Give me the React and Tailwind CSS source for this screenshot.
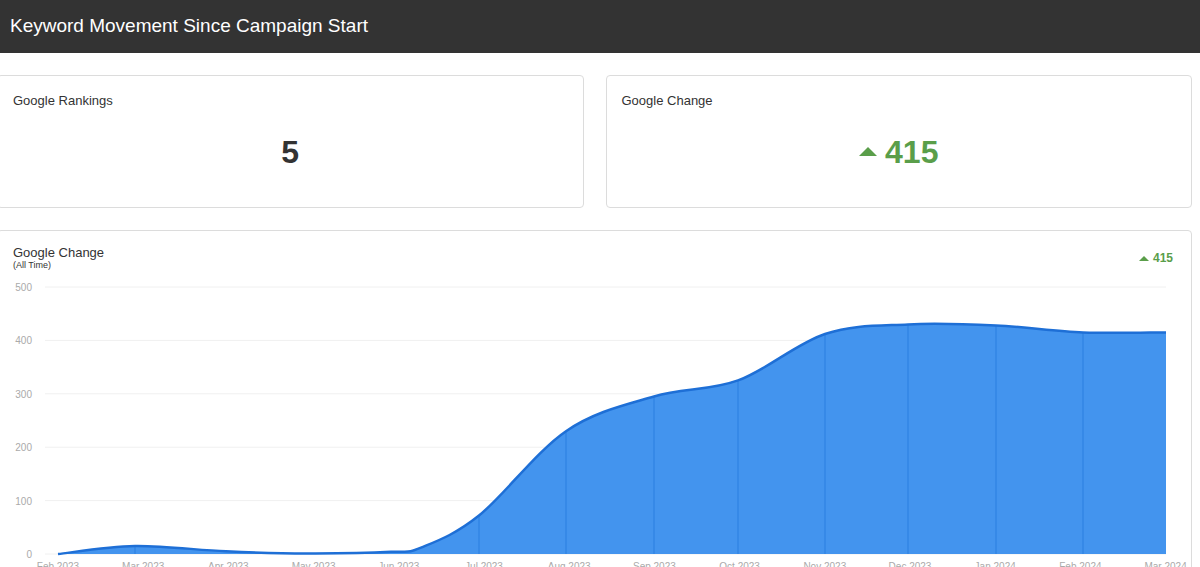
const pts=[[57,0],[134,15],[225,5],[306,1],[390,4],[420,12],[478,72],[565,230],[653,295],[737,325],[824,412],[907,430],[995,428],[1082,415],[1165,415]];
const Y=v=>555-v*0.534;
function path(){const p=pts.map(([x,v])=>[x,Y(v)]);let d=`M${p[0][0]},${p[0][1]}`;for(let i=0;i<p.length-1;i++){const p0=p[i-1]||p[i],p1=p[i],p2=p[i+1],p3=p[i+2]||p2;const t=6;d+=` C${p1[0]+(p2[0]-p0[0])/t},${p1[1]+(p2[1]-p0[1])/t} ${p2[0]-(p3[0]-p1[0])/t},${p2[1]-(p3[1]-p1[1])/t} ${p2[0]},${p2[1]}`;}return d;}
export default function App(){const d=path();const font={fontFamily:'"Liberation Sans",Arial,sans-serif'};
return(<div style={font} className="w-[1200px] h-[567px] overflow-hidden bg-white">
<div className="h-[53px] bg-[#333333] flex items-center px-[10px] text-white text-[19px]">Keyword Movement Since Campaign Start</div>
<div className="flex gap-[22px] mt-[22px] ml-[-3px] w-[1195px]">
<div className="flex-1 h-[133px] border border-[#dcdcdc] rounded-[4px] px-[15px] pt-[15px]"><div className="text-[13px] text-[#333]">Google Rankings</div><div className="text-center text-[32px] font-bold text-[#333] mt-[17px]">5</div></div>
<div className="flex-1 h-[133px] border border-[#dcdcdc] rounded-[4px] px-[15px] pt-[15px]"><div className="text-[13px] text-[#333]">Google Change</div><div className="text-center text-[32px] font-bold text-[#5a9e4a] mt-[17px] flex items-center justify-center gap-[8px]"><span className="inline-block w-0 h-0 border-l-[9px] border-r-[9px] border-b-[9px] border-l-transparent border-r-transparent border-b-[#5a9e4a]"></span>415</div></div>
</div>
<div className="mt-[22px] ml-[-3px] w-[1195px] border border-[#dcdcdc] rounded-[4px] h-[400px]">
<div className="flex justify-between pl-[15px] pr-[18px] pt-[14px]"><div><div className="text-[13px] text-[#333] leading-[15px]">Google Change</div><div className="text-[9px] text-[#333] leading-[11px]">(All Time)</div></div><div className="text-[12px] font-bold text-[#5a9e4a] flex items-center gap-[4px]"><span className="inline-block w-0 h-0 border-l-[5px] border-r-[5px] border-b-[5px] border-l-transparent border-r-transparent border-b-[#5a9e4a]"></span>415</div></div>
<svg width="1195" height="300" viewBox="-3 272 1195 300" className="block">
{[0,100,200,300,400,500].map(v=>(<g key={v}><line x1="44" x2="1165" y1={Y(v)} y2={Y(v)} stroke="#f0f0f0"/><text x="31" y={Y(v)+4} textAnchor="end" fontSize="10" fill="#aaa">{v}</text></g>))}
<path d={`${d} L1165,555 L57,555 Z`} fill="#4394ee"/>
{pts.filter(p=>[134,478,565,653,737,824,907,995,1082].includes(p[0])).map(([x,v])=><line key={x} x1={x} x2={x} y1={Y(v)} y2="555" stroke="#2a7fe0" strokeWidth="1"/>)}
<path d={d} fill="none" stroke="#1e6fd6" strokeWidth="2.5"/>
{["Feb 2023","Mar 2023","Apr 2023","May 2023","Jun 2023","Jul 2023","Aug 2023","Sep 2023","Oct 2023","Nov 2023","Dec 2023","Jan 2024","Feb 2024","Mar 2024"].map((t,i)=><text key={t} x={pts[0][0]+i*85.2} y="571" textAnchor="middle" fontSize="10" fill="#aaa">{t}</text>)}
</svg></div></div>);}
